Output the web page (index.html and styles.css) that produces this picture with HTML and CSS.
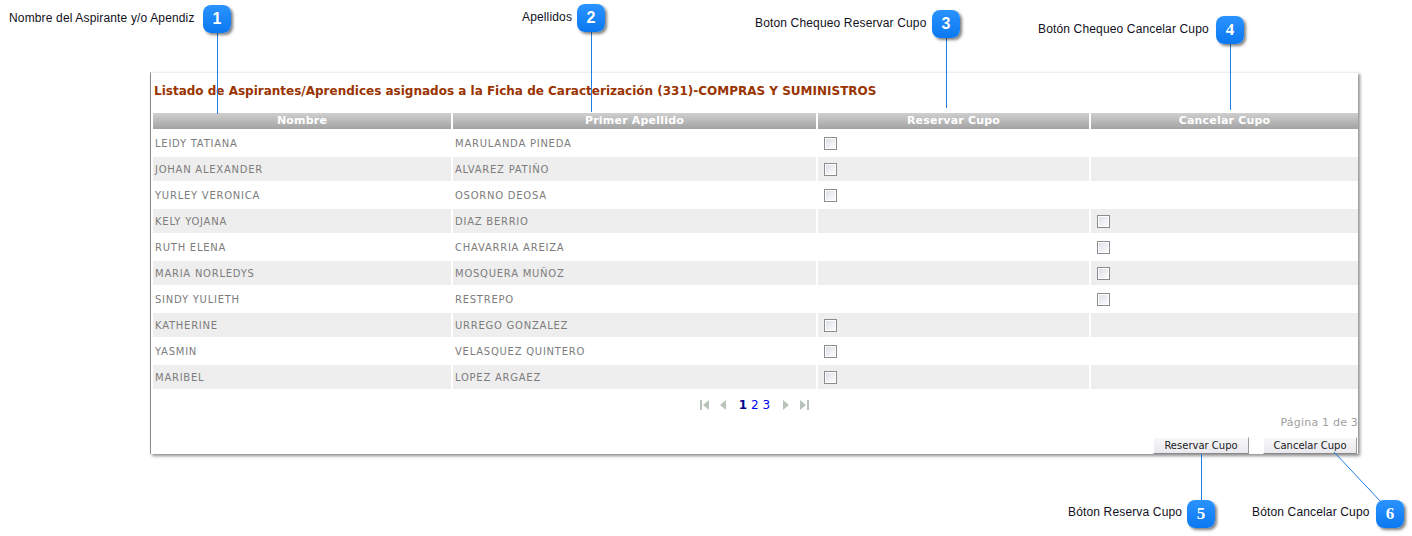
FILE: index.html
```html
<!DOCTYPE html>
<html lang="es">
<head>
<meta charset="utf-8">
<title>Listado de Aspirantes</title>
<link rel="stylesheet" href="styles.css">
</head>
<body>
<div class="page">
  <section class="panel">
    <h1 class="title">Listado de Aspirantes/Aprendices asignados a la Ficha de Caracterización (331)-COMPRAS Y SUMINISTROS</h1>
    <table class="grid">
      <colgroup>
        <col class="c1"><col class="c2"><col class="c3"><col class="c4">
      </colgroup>
      <thead>
        <tr><th>Nombre</th><th>Primer Apellido</th><th>Reservar Cupo</th><th>Cancelar Cupo</th></tr>
      </thead>
      <tbody>
        <tr><td>LEIDY TATIANA</td><td>MARULANDA PINEDA</td><td><span class="chk"></span></td><td></td></tr>
        <tr><td>JOHAN ALEXANDER</td><td>ALVAREZ PATIÑO</td><td><span class="chk"></span></td><td></td></tr>
        <tr><td>YURLEY VERONICA</td><td>OSORNO DEOSA</td><td><span class="chk"></span></td><td></td></tr>
        <tr><td>KELY YOJANA</td><td>DIAZ BERRIO</td><td></td><td><span class="chk"></span></td></tr>
        <tr><td>RUTH ELENA</td><td>CHAVARRIA AREIZA</td><td></td><td><span class="chk"></span></td></tr>
        <tr><td>MARIA NORLEDYS</td><td>MOSQUERA MUÑOZ</td><td></td><td><span class="chk"></span></td></tr>
        <tr><td>SINDY YULIETH</td><td>RESTREPO</td><td></td><td><span class="chk"></span></td></tr>
        <tr><td>KATHERINE</td><td>URREGO GONZALEZ</td><td><span class="chk"></span></td><td></td></tr>
        <tr><td>YASMIN</td><td>VELASQUEZ QUINTERO</td><td><span class="chk"></span></td><td></td></tr>
        <tr><td>MARIBEL</td><td>LOPEZ ARGAEZ</td><td><span class="chk"></span></td><td></td></tr>
      </tbody>
    </table>
    <div class="pager">
      <svg class="pg-icon" width="9" height="10" viewBox="0 0 9 10"><rect x="0" y="0" width="2" height="10"/><polygon points="9,0 9,10 3,5"/></svg>
      <svg class="pg-icon" width="6" height="10" viewBox="0 0 6 10"><polygon points="6,0 6,10 0,5"/></svg>
      <span class="pages"><b class="cur">1</b> <span class="pl">2</span> <span class="pl">3</span></span>
      <svg class="pg-icon" width="6" height="10" viewBox="0 0 6 10"><polygon points="0,0 0,10 6,5"/></svg>
      <svg class="pg-icon" width="9" height="10" viewBox="0 0 9 10"><polygon points="0,0 0,10 6,5"/><rect x="7" y="0" width="2" height="10"/></svg>
    </div>
    <div class="pageinfo">Página 1 de 3</div>
    <div class="actions">
      <button class="btn btn-res">Reservar Cupo</button>
      <button class="btn btn-can">Cancelar Cupo</button>
    </div>
  </section>

  <div class="callouts">
    <svg class="leaders" width="1412" height="536" viewBox="0 0 1412 536">
      <line x1="217.5" y1="33" x2="217.5" y2="114"/>
      <line x1="591.5" y1="32" x2="591.5" y2="112"/>
      <line x1="946.5" y1="38" x2="946.5" y2="108"/>
      <line x1="1230.5" y1="44" x2="1230.5" y2="110"/>
      <line x1="1201.5" y1="454" x2="1201.5" y2="500"/>
      <line x1="1334" y1="452" x2="1382" y2="503"/>
    </svg>
    <span class="label l1">Nombre del Aspirante y/o Apendiz</span>
    <span class="badge b1">1</span>
    <span class="label l2">Apellidos</span>
    <span class="badge b2">2</span>
    <span class="label l3">Boton Chequeo Reservar Cupo</span>
    <span class="badge b3">3</span>
    <span class="label l4">Botón Chequeo Cancelar Cupo</span>
    <span class="badge b4 serif">4</span>
    <span class="label l5">Bóton Reserva Cupo</span>
    <span class="badge b5 serif">5</span>
    <span class="label l6">Bóton Cancelar Cupo</span>
    <span class="badge b6 serif">6</span>
  </div>
</div>
</body>
</html>
```

FILE: styles.css
```css
html, body {
  margin: 0;
  padding: 0;
  background: #ffffff;
}

.page {
  position: relative;
  width: 1412px;
  height: 536px;
  overflow: hidden;
  padding-top: 72px;
  box-sizing: border-box;
}

.panel {
  margin-left: 150px;
  width: 1208px;
  height: 382px;
  box-sizing: border-box;
  border-top: 1px solid #ececec;
  border-left: 1px solid #8a8a8a;
  box-shadow: 2px 2px 3px rgba(0, 0, 0, 0.45);
  padding-top: 10px;
  background: #fff;
  font-family: "DejaVu Sans", Verdana, sans-serif;
}

.title {
  margin: 0 0 12px 3px;
  font-size: 12px;
  line-height: 16px;
  font-weight: bold;
  color: #993300;
  white-space: nowrap;
}

.grid {
  border-collapse: separate;
  border-spacing: 2px;
  width: 1207px;
  table-layout: fixed;
}

.c1 { width: 298px; }
.c2 { width: 363px; }
.c3 { width: 271px; }
.c4 { width: 267px; }

.grid th {
  height: 16px;
  padding: 0;
  background: linear-gradient(#cfcfcf, #a3a3a3);
  color: #ffffff;
  font-size: 11px;
  font-weight: bold;
  line-height: 16px;
  text-align: center;
  letter-spacing: 0.2px;
}

.grid td {
  height: 24px;
  padding: 0 0 0 2px;
  font-size: 10px;
  color: #7c7c7c;
  letter-spacing: 0.75px;
  vertical-align: middle;
  white-space: nowrap;
}

.grid tbody tr:nth-child(even) td {
  background: #eeeeee;
}

.chk {
  display: block;
  width: 11px;
  height: 11px;
  margin-left: 4px;
  border: 1px solid #8c8c8c;
  box-shadow: inset 0 0 0 1px #ffffff;
  background: linear-gradient(135deg, #d8dce6 0%, #f4f5f8 70%, #ffffff 100%);
}

.pager {
  margin-top: 7px;
  height: 14px;
  display: flex;
  justify-content: center;
  align-items: center;
  gap: 11px;
}

.pg-icon {
  fill: #b8c4b8;
}

.pages {
  font-size: 12px;
  line-height: 14px;
  color: #0000ee;
  margin: 0 2px;
}

.cur {
  color: #00008b;
}

.pageinfo {
  margin-top: 4px;
  height: 14px;
  line-height: 14px;
  text-align: right;
  font-size: 11px;
  color: #a0a0a0;
  letter-spacing: 0.2px;
}

.actions {
  margin-top: 7px;
  display: flex;
  justify-content: flex-end;
  gap: 14px;
  padding-right: 1px;
}

.btn {
  height: 17px;
  margin: 0;
  padding: 0;
  font-family: "DejaVu Sans", Verdana, sans-serif;
  font-size: 10px;
  line-height: 15px;
  color: #222;
  white-space: nowrap;
  text-align: center;
  background: linear-gradient(#f8f8f8, #e8e8ee);
  border: 1px solid;
  border-color: #ffffff #9a9a9a #8a8a8a #ffffff;
  border-radius: 0;
  box-sizing: border-box;
}

.btn-res { width: 96px; }
.btn-can { width: 94px; }

/* callouts */
.callouts {
  position: absolute;
  left: 0;
  top: 0;
  width: 1412px;
  height: 536px;
  pointer-events: none;
}

.leaders {
  position: absolute;
  left: 0;
  top: 0;
}

.leaders line {
  stroke: #1e7ee6;
  stroke-width: 1;
}

.label {
  position: absolute;
  font-family: "Liberation Sans", Arial, sans-serif;
  font-size: 12px;
  line-height: 14px;
  color: #111122;
  white-space: nowrap;
  letter-spacing: 0.15px;
}

.l1 { left: 9px; top: 11px; }
.l2 { left: 522px; top: 10px; }
.l3 { left: 755px; top: 16px; }
.l4 { left: 1038px; top: 22px; }
.l5 { left: 1068px; top: 505px; }
.l6 { left: 1252px; top: 505px; }

.badge {
  position: absolute;
  width: 28px;
  height: 28px;
  border-radius: 8px;
  background: linear-gradient(#2b93ff, #0a78f0);
  box-shadow: 2px 2px 3px rgba(0, 0, 0, 0.5);
  color: #ffffff;
  font-family: "Liberation Sans", Arial, sans-serif;
  font-size: 16px;
  font-weight: bold;
  line-height: 28px;
  text-align: center;
}

.badge.serif {
  font-family: "Liberation Serif", "Times New Roman", serif;
  font-size: 17px;
}

.b1 { left: 203px; top: 5px; }
.b2 { left: 577px; top: 4px; }
.b3 { left: 932px; top: 10px; }
.b4 { left: 1216px; top: 16px; }
.b5 { left: 1187px; top: 500px; }
.b6 { left: 1376px; top: 500px; }
```
